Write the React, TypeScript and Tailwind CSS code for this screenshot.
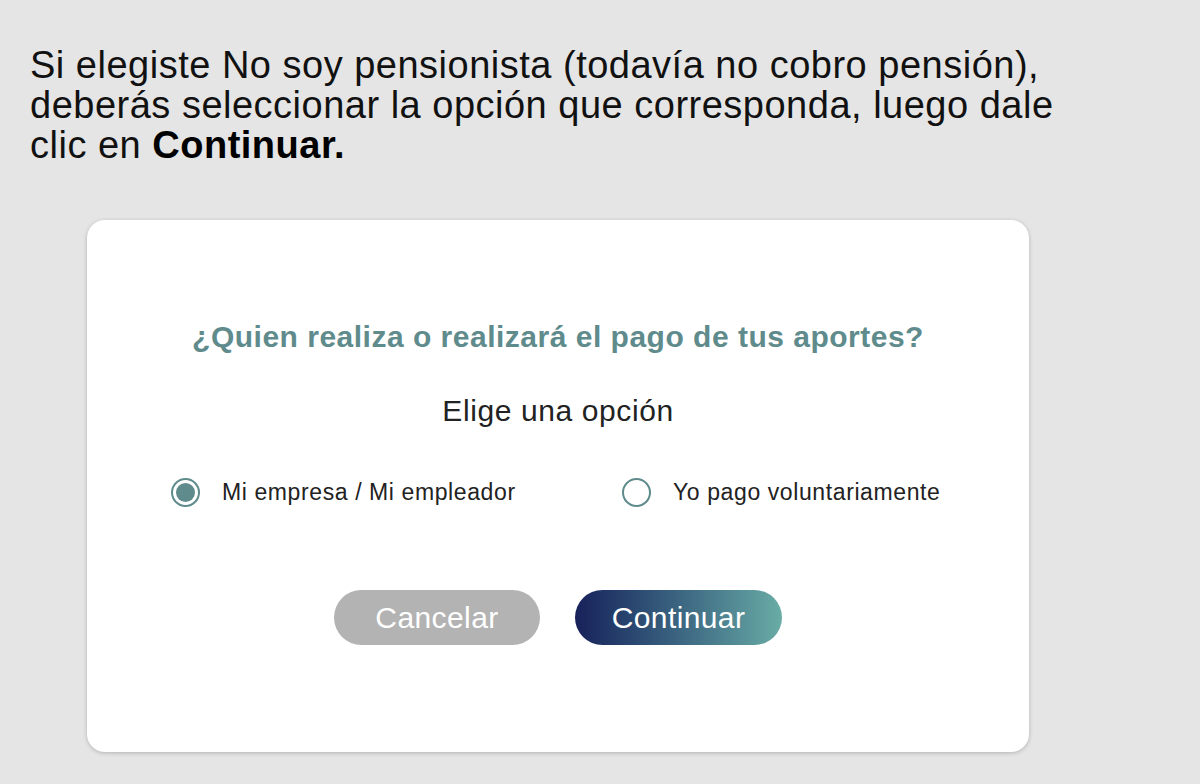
import { useState } from "react";

const font = { fontFamily: '"Liberation Sans", Arial, sans-serif' };

function Radio({ checked, label, onClick }: { checked: boolean; label: string; onClick: () => void }) {
  return (
    <button type="button" onClick={onClick} className="flex items-center gap-[22px] text-left">
      <span className="flex h-[29px] w-[29px] shrink-0 items-center justify-center rounded-full border-2 border-[#5f8b8c] bg-white">
        {checked && <span className="h-[19px] w-[19px] rounded-full bg-[#5f8b8c]" />}
      </span>
      <span className="text-[23px] leading-none tracking-[0.6px] text-[#222]">{label}</span>
    </button>
  );
}

export default function App() {
  const [payer, setPayer] = useState("empresa");

  return (
    <div className="min-h-[784px] w-full bg-[#e5e5e5] pt-[45px]" style={font}>
      <p className="pl-[30px] text-[38px] leading-[40px] tracking-[0.5px] text-[#111]">
        Si elegiste No soy pensionista (todavía no cobro pensión),
        <br />
        deberás seleccionar la opción que corresponda, luego dale
        <br />
        clic en <b className="font-bold text-black">Continuar.</b>
      </p>

      <div className="ml-[87px] mt-[55px] h-[532px] w-[942px] rounded-[18px] bg-white pt-[99px] shadow-[0_1px_4px_rgba(0,0,0,0.22)]">
        <h2 className="text-center text-[30px] font-bold leading-[36px] tracking-[0.5px] text-[#5f8b8c]">
          ¿Quien realiza o realizará el pago de tus aportes?
        </h2>
        <p className="mt-[38px] text-center text-[30px] leading-[36px] tracking-[0.6px] text-[#222]">Elige una opción</p>

        <div className="mt-[49px] flex items-center pl-[84px]">
          <div className="w-[451px]">
            <Radio checked={payer === "empresa"} label="Mi empresa / Mi empleador" onClick={() => setPayer("empresa")} />
          </div>
          <Radio checked={payer === "yo"} label="Yo pago voluntariamente" onClick={() => setPayer("yo")} />
        </div>

        <div className="mt-[83px] flex justify-center gap-[35px]">
          <button type="button" className="h-[55px] w-[206px] rounded-full bg-[#b3b3b3] text-[30px] tracking-[0.4px] text-white">
            Cancelar
          </button>
          <button
            type="button"
            className="h-[55px] w-[207px] rounded-full bg-gradient-to-r from-[#18215a] to-[#69aca5] text-[30px] tracking-[0.4px] text-white"
          >
            Continuar
          </button>
        </div>
      </div>
    </div>
  );
}
